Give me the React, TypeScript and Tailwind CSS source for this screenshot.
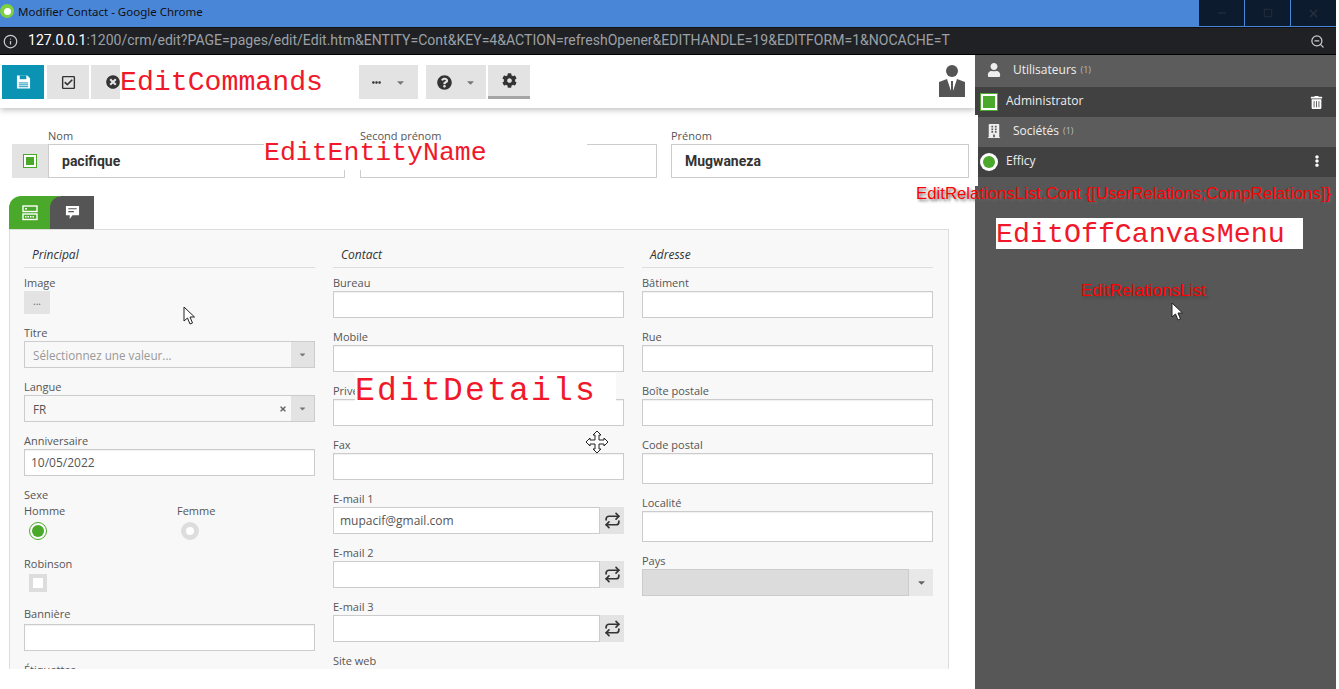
import { FaRegCheckSquare, FaTimesCircle, FaEllipsisH, FaQuestionCircle, FaCog, FaUser, FaBuilding, FaTrashAlt, FaEllipsisV, FaCaretDown, FaTimes } from "react-icons/fa"
import { ZoomOut, Info, Minus, Square, X, Repeat } from "lucide-react"

const Label = ({ text }: { text: string }) => (
  <div className="h-[17px] text-[11px] leading-[17px] text-[#555]">{text}</div>
)

const Input = ({ value, tall }: { value?: string; tall?: boolean }) => (
  <div
    className={`${tall ? "h-[31px]" : "h-[27px]"} mb-[10px] border border-[#ccc] bg-white px-[6px] text-[12px] leading-[25px] text-[#555] shadow-[inset_0_1px_1px_rgba(0,0,0,0.06)]`}
  >
    {value}
  </div>
)

const Field = ({ label, value, tall }: { label: string; value?: string; tall?: boolean }) => (
  <div>
    <Label text={label} />
    <Input value={value} tall={tall} />
  </div>
)

const MailField = ({ label, value }: { label: string; value?: string }) => (
  <div>
    <Label text={label} />
    <div className="mb-[10px] flex h-[27px]">
      <div className="flex-1 border border-[#ccc] bg-white px-[6px] text-[12px] leading-[25px] text-[#555]">{value}</div>
      <div className="flex w-[24px] items-center justify-center bg-[#e3e3e3] text-[#333]">
        <Repeat size={17} strokeWidth={2.4} />
      </div>
    </div>
  </div>
)

const SelectField = ({ label, value, clear }: { label: string; value?: string; clear?: boolean }) => (
  <div>
    <Label text={label} />
    <div className="mb-[10px] flex h-[27px] border border-[#ccc] bg-[#f8f8f8]">
      <div className={`flex-1 px-[8px] text-[11.7px] leading-[27px] ${value === "FR" ? "text-[#555]" : "text-[#999]"}`}>{value}</div>
      {clear && (
        <div className="flex w-[12px] items-center text-[#666]">
          <FaTimes size={8} />
        </div>
      )}
      <div className="flex w-[23px] items-center justify-center bg-[#e3e3e3] text-[#777]">
        <FaCaretDown size={9} />
      </div>
    </div>
  </div>
)

const SectionTitle = ({ text }: { text: string }) => (
  <div className="mb-[6px] h-[22px] border-b border-[#ddd] pl-[8px] text-[12px] italic leading-[17px] text-[#333]">
    {text}
  </div>
)

const ToolButton = ({ children, className }: { children: React.ReactNode; className: string }) => (
  <div className={`flex h-[34px] items-center justify-center ${className}`}>{children}</div>
)

const RelationHeader = ({ icon, text, className }: { icon: React.ReactNode; text: string; className: string }) => (
  <div className={`flex items-center bg-[#5c5c5c] pl-[12px] text-[12px] text-[#eee] ${className}`}>
    <span className="flex w-[26px] text-[#eee]">{icon}</span>
    {text}
    <span className="ml-[4px] text-[9px] text-[#bbb]">(1)</span>
  </div>
)

export default function App() {
  return (
    <div className="relative h-[689px] w-[1339px] overflow-hidden bg-white font-['Open_Sans',sans-serif]">
      <div className="flex h-[689px] w-[1336px] flex-col">
        {/* window title */}
        <div className="flex h-[28px] shrink-0 border-b border-[#111] bg-[#4a86d8]">
          <div className="mt-[4px] flex h-[14px] w-[14px] items-center justify-center rounded-full bg-[#7dd13f]">
            <div className="h-[7px] w-[7px] rounded-full bg-white" />
          </div>
          <span className="ml-[4px] font-['Noto_Sans',sans-serif] text-[11.5px] leading-[24px] text-[#111]">
            Modifier Contact - Google Chrome
          </span>
          <div className="ml-auto flex h-[26px] gap-px text-[#2a3340]">
            <div className="flex w-[45px] items-center justify-center bg-[#0d1b2e]"><Minus size={12} /></div>
            <div className="flex w-[45px] items-center justify-center bg-[#0d1b2e]"><Square size={10} /></div>
            <div className="flex w-[45px] items-center justify-center bg-[#0d1b2e]"><X size={13} /></div>
          </div>
        </div>

        {/* address bar */}
        <div className="flex h-[27px] shrink-0 items-center border-b border-black bg-[#202124] pl-[3px] pr-[11px]">
          <Info size={15} className="text-[#ccc]" />
          <span className="ml-[10px] font-['Roboto',sans-serif] text-[14.06px] text-[#9aa0a6]">
            <span className="text-white">127.0.0.1</span>:1200/crm/edit?PAGE=pages/edit/Edit.htm&amp;ENTITY=Cont&amp;KEY=4&amp;ACTION=refreshOpener&amp;EDITHANDLE=19&amp;EDITFORM=1&amp;NOCACHE=T
          </span>
          <ZoomOut size={15} className="ml-auto text-[#ccc]" />
        </div>

        <div className="flex min-h-0 flex-1">
          {/* edit column */}
          <div className="h-[614px] w-[975px] shrink-0 overflow-hidden">
            {/* commands */}
            <div className="relative z-10 flex h-[53px] items-start bg-white pl-[2px] pt-[10px] shadow-[0_2px_6px_rgba(0,0,0,0.25)]">
              <ToolButton className="w-[42px] bg-[#0a93b3]">
                <svg viewBox="0 0 16 16" className="h-[16px] w-[15px]">
                  <path d="M1 1h11l3 3v11H1z" fill="white" />
                  <path d="M4 1h7v4H4z" fill="#0a93b3" />
                  <path d="M3 9h10M3 11h10M3 13h10" stroke="#0a93b3" strokeWidth="1" />
                </svg>
              </ToolButton>
              <ToolButton className="ml-[3px] w-[42px] bg-[#e3e3e3] text-[#333]"><FaRegCheckSquare size={15} /></ToolButton>
              <ToolButton className="ml-[2px] w-[100px] justify-start bg-[#e3e3e3] pl-[15px] text-[#333]"><FaTimesCircle size={14} /></ToolButton>
              <div className="w-[168px]" />
              <ToolButton className="w-[59px] gap-[14px] bg-[#e3e3e3] text-[#333]"><FaEllipsisH size={9} /><FaCaretDown size={11} className="text-[#777]" /></ToolButton>
              <ToolButton className="ml-[8px] w-[60px] gap-[13px] bg-[#e3e3e3] text-[#333]"><FaQuestionCircle size={15} /><FaCaretDown size={11} className="text-[#777]" /></ToolButton>
              <ToolButton className="ml-[2px] w-[42px] border-b-[3px] border-[#a5a5a5] bg-[#e3e3e3] text-[#333]"><FaCog size={15} /></ToolButton>
              <svg viewBox="0 0 26 32" className="ml-auto mr-[10px] h-[32px] w-[26px] text-[#555]" fill="currentColor">
                <circle cx="13" cy="6" r="6" />
                <path d="M0 32V17l8-3 4 12V16h2v10l4-12 8 3v15z" />
              </svg>
            </div>

            {/* entity name */}
            <div className="flex h-[81px] gap-[15px] pl-[12px] pr-[6px] pt-[19px]">
              <div className="w-[333px]">
                <div className="pl-[36px]"><Label text="Nom" /></div>
                <div className="flex h-[34px]">
                  <div className="flex w-[36px] items-center justify-center bg-[#e3e3e3]">
                    <div className="flex h-[14px] w-[14px] items-center justify-center border border-[#4aa82a] bg-white">
                      <div className="h-[8px] w-[8px] bg-[#4aa82a]" />
                    </div>
                  </div>
                  <div className="flex-1 border border-[#ccc] bg-white pl-[13px] font-['Roboto',sans-serif] text-[14px] font-bold leading-[32px] text-[#333]">pacifique</div>
                </div>
              </div>
              <div className="w-[297px]">
                <Label text="Second prénom" />
                <div className="h-[34px] border border-[#ccc] bg-white" />
              </div>
              <div className="ml-[-1px] w-[298px]">
                <Label text="Prénom" />
                <div className="h-[34px] border border-[#ccc] bg-white pl-[13px] font-['Roboto',sans-serif] text-[14px] font-bold leading-[32px] text-[#333]">Mugwaneza</div>
              </div>
            </div>

            {/* tabs */}
            <div className="ml-[9px] mt-[7px] flex h-[33px] w-[85px]">
              <div className="flex w-[50px] shrink-0 items-center justify-center rounded-tl-[12px] bg-[#4aa82a] pr-[8px]">
                <svg viewBox="0 0 16 16" className="h-[16px] w-[16px]" fill="none" stroke="white" strokeWidth="1.4">
                  <rect x="1" y="1" width="14" height="5.5" />
                  <rect x="1" y="9" width="14" height="5.5" />
                  <path d="M3 11.8h10" strokeDasharray="1.500 1" />
                  <path d="M3 3.800h2" />
                </svg>
              </div>
              <div className="z-10 ml-[-9px] flex w-[44px] shrink-0 items-center justify-center rounded-tl-[12px] bg-[#555]">
                <svg viewBox="0 0 16 16" className="h-[15px] w-[15px]" fill="white">
                  <path d="M1 1h14v10H8l-3 4v-4H1z" />
                  <path d="M3.500 4h9M3.500 7h6" stroke="#555" strokeWidth="1.300" />
                </svg>
              </div>
            </div>

            {/* details */}
            <div className="ml-[9px] flex h-[460px] w-[940px] gap-[18px] border border-[#ddd] bg-[#f8f8f8] px-[14px] pt-[16px]">
              <div className="w-[291px]">
                <SectionTitle text="Principal" />
                <Label text="Image" />
                <div className="mb-[10px] h-[23px] w-[26px] bg-[#e3e3e3] text-center text-[10px] leading-[20px] text-[#666]">...</div>
                <SelectField label="Titre" value="Sélectionnez une valeur..." />
                <SelectField label="Langue" value="FR" clear />
                <Field label="Anniversaire" value="10/05/2022" />
                <div className="h-[16px] text-[11px] leading-[17px] text-[#555]">Sexe</div>
                <div className="flex">
                  <div className="w-[153px]">
                    <Label text="Homme" />
                    <div className="ml-[5px] mt-[3px] flex h-[18px] w-[18px] items-center justify-center rounded-full border border-[#4aa82a] bg-white">
                      <div className="h-[12px] w-[12px] rounded-full bg-[#4aa82a]" />
                    </div>
                  </div>
                  <div>
                    <Label text="Femme" />
                    <div className="ml-[4px] mt-[3px] h-[18px] w-[18px] rounded-full border-[5px] border-[#ddd] bg-white" />
                  </div>
                </div>
                <div className="mt-[15px]"><Label text="Robinson" /></div>
                <div className="ml-[5px] mt-[2px] h-[18px] w-[18px] border-[4px] border-[#ddd] bg-white" />
                <div className="mt-[13px]"><Label text="Bannière" /></div>
                <div className="mt-[2px]"><Input /></div>
                <Label text="Étiquettes" />
              </div>

              <div className="w-[291px]">
                <SectionTitle text="Contact" />
                <Field label="Bureau" />
                <Field label="Mobile" />
                <Field label="Privé" />
                <Field label="Fax" />
                <MailField label="E-mail 1" value="mupacif@gmail.com" />
                <MailField label="E-mail 2" />
                <MailField label="E-mail 3" />
                <Label text="Site web" />
              </div>

              <div className="w-[291px]">
                <SectionTitle text="Adresse" />
                <Field label="Bâtiment" />
                <Field label="Rue" />
                <Field label="Boîte postale" />
                <Field label="Code postal" tall />
                <Field label="Localité" tall />
                <Label text="Pays" />
                <div className="flex h-[27px]">
                  <div className="flex-1 border border-[#ccc] bg-[#dcdcdc]" />
                  <div className="flex w-[24px] items-center justify-center bg-[#e8e8e8] text-[#666]">
                    <FaCaretDown size={11} />
                  </div>
                </div>
              </div>
            </div>
          </div>

          {/* relations */}
          <div className="flex-1 bg-[#575757]">
            <RelationHeader icon={<FaUser size={14} />} text="Utilisateurs" className="h-[32px] pb-[3px]" />
            <div className="flex h-[30px] items-center bg-[#414141] pb-[3px] pl-[5px] pr-[13px] text-[12px] text-[#eee]">
              <div className="mr-[8px] mt-[3px] flex h-[18px] w-[18px] items-center justify-center border border-[#4aa82a] bg-white">
                <div className="h-[12px] w-[12px] bg-[#4aa82a]" />
              </div>
              Administrator
              <FaTrashAlt size={13} className="ml-auto mt-[3px] text-white" />
            </div>
            <RelationHeader icon={<FaBuilding size={14} />} text="Sociétés" className="h-[30px] pb-[2px]" />
            <div className="flex h-[30px] items-center bg-[#414141] pb-[3px] pl-[5px] pr-[13px] text-[12px] text-[#eee]">
              <div className="mr-[8px] mt-[3px] flex h-[18px] w-[18px] items-center justify-center rounded-full bg-white">
                <div className="h-[12px] w-[12px] rounded-full bg-[#4aa82a]" />
              </div>
              Efficy
              <FaEllipsisV size={12} className="ml-auto text-white" />
            </div>
          </div>
        </div>
      </div>

      {/* white patch of the entity header over the panel */}
      <div className="absolute left-[975px] top-[115px] h-[71px] w-[3px] bg-white" />

      {/* annotations */}
      <div className="absolute left-[120px] top-[65px] z-20 h-[34px] w-[239px] bg-white font-['Liberation_Mono',monospace] text-[28.2px] leading-[35px] text-[#f0182a]">EditCommands</div>
      <div className="absolute left-[264px] top-[141px] z-20 h-[29px] w-[323px] bg-white font-['Liberation_Mono',monospace] text-[26.5px] leading-[24px] text-[#f0182a]">EditEntityName</div>
      <div className="absolute left-[355px] top-[373px] z-20 h-[30px] w-[261px] bg-white font-['Liberation_Mono',monospace] text-[33px] leading-[38px] tracking-[2.2px] text-[#f0182a]">EditDetails</div>
      <div className="absolute left-[996px] top-[218px] z-20 h-[31px] w-[307px] bg-white font-['Liberation_Mono',monospace] text-[28.3px] leading-[32px] text-[#f0182a]">EditOffCanvasMenu</div>
      <div className="absolute left-[916px] top-[184px] z-20 whitespace-nowrap font-['Liberation_Sans',sans-serif] text-[16.8px] leading-[20px] text-[#f00] [text-shadow:2px_2px_3px_#666]">EditRelationsList.Cont {"{[UserRelations;CompRelations]}"}</div>
      <div className="absolute left-[1081px] top-[281px] z-20 whitespace-nowrap font-['Liberation_Sans',sans-serif] text-[16.8px] leading-[20px] text-[#f00] [text-shadow:2px_2px_3px_#444]">EditRelationsList</div>

      {/* mouse cursors */}
      <svg viewBox="0 0 12 19" className="absolute left-[183px] top-[306px] z-20 h-[19px] w-[12px]" fill="white" stroke="#222">
        <path d="M1 1v14l3.500-3 2.500 6 2.500-1-2.500-6h4.500z" />
      </svg>
      <svg viewBox="0 0 12 19" className="absolute left-[1171px] top-[302px] z-20 h-[19px] w-[12px]" fill="white" stroke="#222">
        <path d="M1 1v14l3.500-3 2.500 6 2.500-1-2.500-6h4.500z" />
      </svg>
      <svg viewBox="0 0 24 24" className="absolute left-[585px] top-[430px] z-20 h-[24px] w-[24px]" fill="white" stroke="#222">
        <path d="M12 1l4 4h-2v5h5V8l4 4-4 4v-2h-5v5h2l-4 4-4-4h2v-5H5v2l-4-4 4-4v2h5V5H8z" />
      </svg>
    </div>
  )
}
